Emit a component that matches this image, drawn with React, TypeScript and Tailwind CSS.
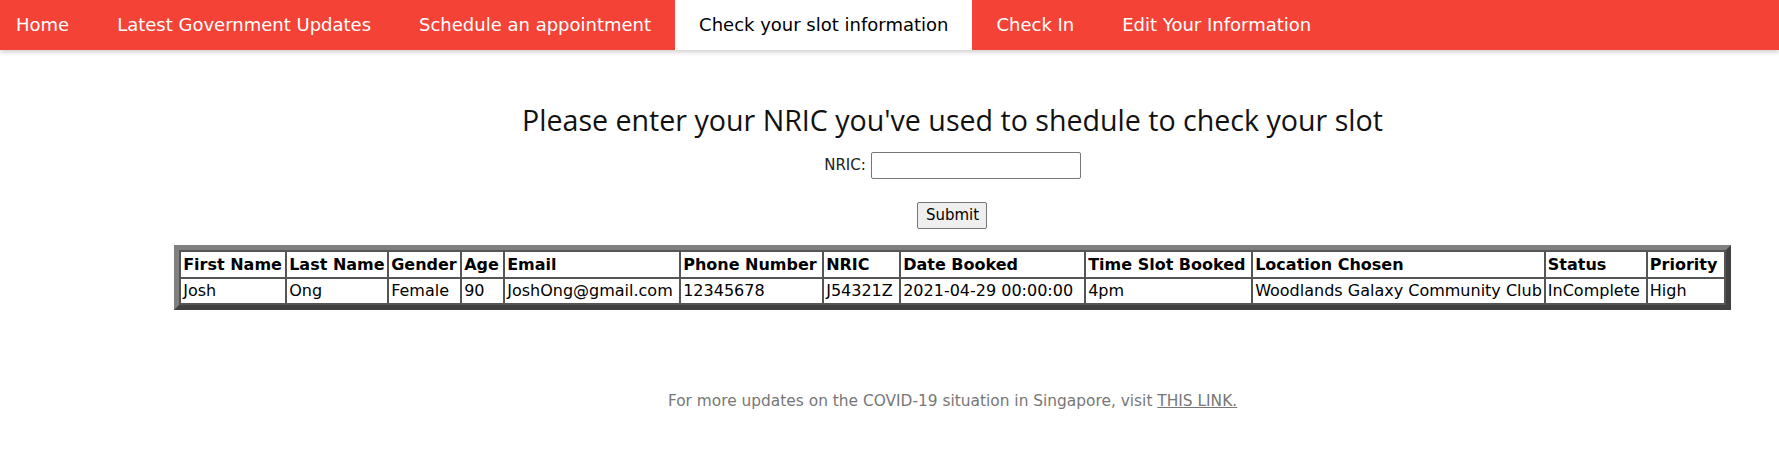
const navItems = [
    "Home",
    "Latest Government Updates",
    "Schedule an appointment",
    "Check your slot information",
    "Check In",
    "Edit Your Information",
]

const columns = [
    { label: "First Name", w: "w-[106px]" },
    { label: "Last Name", w: "w-[102px]" },
    { label: "Gender", w: "w-[73px]" },
    { label: "Age", w: "w-[43px]" },
    { label: "Email", w: "w-[176px]" },
    { label: "Phone Number", w: "w-[143px]" },
    { label: "NRIC", w: "w-[77px]" },
    { label: "Date Booked", w: "w-[185px]" },
    { label: "Time Slot Booked", w: "w-[167px]" },
    { label: "Location Chosen", w: "w-[292px]" },
    { label: "Status", w: "w-[102px]" },
    { label: "Priority", w: "w-[78px]" },
]

const row = [
    "Josh",
    "Ong",
    "Female",
    "90",
    "JoshOng@gmail.com",
    "12345678",
    "J54321Z",
    "2021-04-29 00:00:00",
    "4pm",
    "Woodlands Galaxy Community Club",
    "InComplete",
    "High",
]

const App = () => {
    return (
        <div className="min-h-screen bg-white font-['DejaVu_Sans',sans-serif]">
            {/* top navigation */}
            <nav className="flex h-[50px] bg-[#f44336] shadow-[0_2px_5px_rgba(0,0,0,0.2)]">
                {navItems.map((item, i) => (
                    <a
                        key={item}
                        href="#"
                        className={
                            (i === 0 ? "pl-4 pr-6 " : "px-6 ") +
                            (i === 3 ? "bg-white text-black " : "text-white ") +
                            "flex items-center text-[18px] leading-none"
                        }
                    >
                        {item}
                    </a>
                ))}
            </nav>

            <main className="flex flex-col items-center pl-[126px]">
                <h1 className="mt-[50px] text-[28.6px] leading-[40px] text-[#111] font-['Open_Sans',sans-serif]">
                    Please enter your NRIC you've used to shedule to check your slot
                </h1>

                <form className="flex flex-col items-center">
                    <div className="mt-[12px] flex items-center gap-[5px] text-[15px] text-[#222]">
                        <label>NRIC:</label>
                        <input
                            type="text"
                            className="h-[27px] w-[210px] rounded-[2px] border border-[#767676] px-1"
                        />
                    </div>
                    <button
                        type="button"
                        className="mt-[23px] h-[27px] w-[70px] rounded-[2px] border border-[#767676] bg-[#efefef] text-[15px] text-black"
                    >
                        Submit
                    </button>
                </form>

                <div className="mt-[16px] border-[5px] border-t-[#808080] border-l-[#808080] border-b-[#404040] border-r-[#404040]">
                    <table className="table-fixed border-collapse text-left text-[16px] text-black">
                        <thead>
                            <tr>
                                {columns.map(c => (
                                    <th
                                        key={c.label}
                                        className={c.w + " h-[27px] border-2 border-[#555] px-[2px] font-bold whitespace-nowrap"}
                                    >
                                        {c.label}
                                    </th>
                                ))}
                            </tr>
                        </thead>
                        <tbody>
                            <tr>
                                {row.map((v, i) => (
                                    <td
                                        key={i}
                                        className="h-[26px] border-2 border-[#555] px-[2px] whitespace-nowrap"
                                    >
                                        {v}
                                    </td>
                                ))}
                            </tr>
                        </tbody>
                    </table>
                </div>

                <p className="mt-[80px] text-[15.4px] text-[#777]">
                    For more updates on the COVID-19 situation in Singapore, visit{" "}
                    <a href="#" className="underline">
                        THIS LINK.
                    </a>
                </p>
            </main>
        </div>
    )
}

export default App
